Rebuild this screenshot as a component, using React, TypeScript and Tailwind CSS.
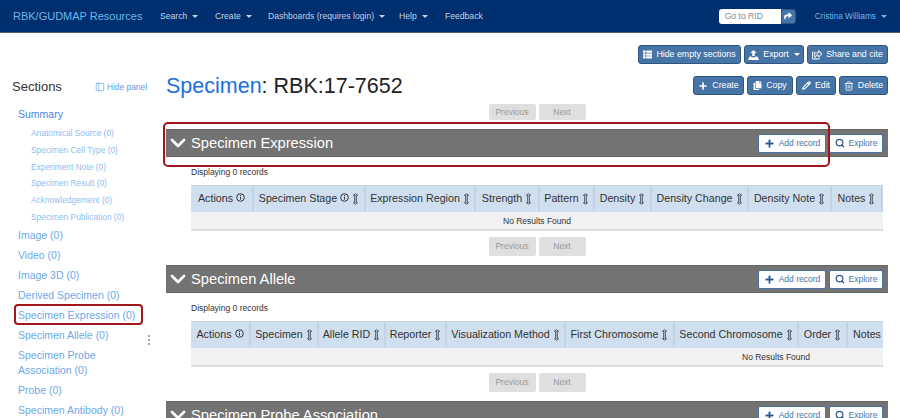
import { ReactNode } from 'react';
import { ChevronDown, PanelLeft, Pencil, Plus, Search, Trash2 } from 'lucide-react';
import { FaCopy, FaRegShareSquare, FaShare, FaThList } from 'react-icons/fa';

function Caret() {
  return <span className="inline-block ml-[5px] align-middle border-x-[3.5px] border-x-transparent border-t-[3.5px] border-t-current" />;
}

function SortIcon() {
  return (
    <svg width="7" height="12" viewBox="0 0 7 12" className="shrink-0" fill="none" stroke="#4c5761" strokeWidth="1">
      <path d="M1 2.6 3.5.7 6 2.6M1 9.4 3.5 11.3 6 9.4" />
      <path d="M2.7 2v8M4.3 2v8" />
    </svg>
  );
}

function InfoIcon() {
  return (
    <svg width="9" height="9" viewBox="0 0 9 9" className="shrink-0 -mt-[2px]" fill="none" stroke="#333" strokeWidth="1">
      <circle cx="4.5" cy="4.5" r="3.8" />
      <path d="M4.5 3.8v2.8M4.5 2v1" />
    </svg>
  );
}

function ExportIcon() {
  return (
    <svg width="11" height="10" viewBox="0 0 11 10" className="shrink-0" fill="currentColor">
      <path d="M5.5 0 8.6 3H6.7v3H4.3V3H2.4z" />
      <path d="M1.6 6.6h1.8v.7h4.2v-.7h1.8L11 10H0z" />
    </svg>
  );
}

function ActionButton({ icon, children, caret, width }: { icon: ReactNode; children: ReactNode; caret?: boolean; width: string }) {
  return (
    <button className={`${width} h-[19px] flex items-center justify-center gap-[4px] rounded-[3px] bg-[#4674a7] border border-[#2e5481] text-white text-[8.8px] whitespace-nowrap`}>
      {icon}
      <span>{children}{caret && <Caret />}</span>
    </button>
  );
}

function Pager({ small }: { small?: boolean }) {
  const cell = small ? 'h-[16px]' : 'h-[19px]';
  return (
    <div className="w-[692px] flex justify-center gap-[3px] text-[8.5px] text-[#999]">
      <span className={`${cell} w-[47px] flex items-center justify-center rounded-[2px] bg-[#dfdfdf]`}>Previous</span>
      <span className={`${cell} w-[47px] flex items-center justify-center rounded-[2px] bg-[#dfdfdf]`}>Next</span>
    </div>
  );
}

function SectionHeader({ title }: { title: string }) {
  return (
    <div className="h-[28px] flex items-center bg-[#737373] border-t border-b border-[#666] text-white">
      <ChevronDown size={24} strokeWidth={2.6} className="shrink-0" />
      <span className="ml-[1px] text-[14.7px] flex-1 leading-none">{title}</span>
      <div className="flex gap-[3px] mr-[5px]">
        <button className="w-[68px] h-[19px] flex items-center justify-center gap-[4px] bg-white border border-[#4674a7] rounded-[2px] text-[#4674a7] text-[8.5px]">
          <Plus size={11} strokeWidth={4} className="text-[#2e5b8f]" />Add record
        </button>
        <button className="w-[54px] h-[19px] flex items-center justify-center gap-[4px] bg-white border border-[#4674a7] rounded-[2px] text-[#4674a7] text-[8.5px]">
          <Search size={10} strokeWidth={3} className="text-[#2e5b8f]" />Explore
        </button>
      </div>
    </div>
  );
}

type Col = { label: string; w: number; info?: boolean; sort?: boolean };

function RecordTable({ cols, center }: { cols: Col[]; center: number }) {
  return (
    <div className="w-[692px] overflow-hidden">
      <div className="flex h-[27px] pb-[1px] bg-[#cfdfef] border-t border-[#c8d4de] text-[10.7px] text-[#333]">
        {cols.map(c => (
          <div
            key={c.label}
            style={{ width: c.w }}
            className="shrink-0 flex items-center justify-center gap-[3px] border-r-2 border-[#c3d3e3] whitespace-nowrap"
          >
            <span>{c.label}</span>
            {c.info && <InfoIcon />}
            {c.sort && <SortIcon />}
          </div>
        ))}
      </div>
      <div className="h-[19px] pt-[2px] flex items-center bg-[#f1f1f1] border-b-2 border-[#dcdcdc] text-[8.5px] text-[#333]">
        <span style={{ marginLeft: center }}>No Results Found</span>
      </div>
    </div>
  );
}

const expressionCols: Col[] = [
  { label: 'Actions', w: 63, info: true },
  { label: 'Specimen Stage', w: 112, info: true, sort: true },
  { label: 'Expression Region', w: 110, sort: true },
  { label: 'Strength', w: 64, sort: true },
  { label: 'Pattern', w: 55, sort: true },
  { label: 'Density', w: 57, sort: true },
  { label: 'Density Change', w: 97, sort: true },
  { label: 'Density Note', w: 83, sort: true },
  { label: 'Notes', w: 51, sort: true },
];

const alleleCols: Col[] = [
  { label: 'Actions', w: 60, info: true },
  { label: 'Specimen', w: 68, sort: true },
  { label: 'Allele RID', w: 67, sort: true },
  { label: 'Reporter', w: 61, sort: true },
  { label: 'Visualization Method', w: 119, sort: true },
  { label: 'First Chromosome', w: 109, sort: true },
  { label: 'Second Chromosome', w: 124, sort: true },
  { label: 'Order', w: 49, sort: true },
  { label: 'Notes', w: 40 },
];

const subLinks = [
  'Anatomical Source (0)',
  'Specimen Cell Type (0)',
  'Experiment Note (0)',
  'Specimen Result (0)',
  'Acknowledgement (0)',
  'Specimen Publication (0)',
];

const sideLinks = [
  'Image (0)',
  'Video (0)',
  'Image 3D (0)',
  'Derived Specimen (0)',
  'Specimen Expression (0)',
  'Specimen Allele (0)',
  'Specimen Probe Association (0)',
  'Probe (0)',
  'Specimen Antibody (0)',
];

function Section({ title, cols, center }: { title: string; cols: Col[]; center: number }) {
  return (
    <section className="mb-[9px]">
      <SectionHeader title={title} />
      <div className="pl-[25px]">
        <p className="mt-[10px] mb-[7px] text-[8.5px] leading-[11px] text-[#333]">Displaying 0 records</p>
        <RecordTable cols={cols} center={center} />
        <div className="mt-[6px]"><Pager /></div>
      </div>
    </section>
  );
}

export default function App() {
  return (
    <div className="relative w-[900px] h-[418px] overflow-hidden bg-white font-['Liberation_Sans',Arial,sans-serif]">
      <nav className="h-[33px] flex items-center bg-[#002f6f] border-b border-[#55606e] text-[#c3d2e6] text-[8.6px]">
        <span className="ml-[13px] w-[147px] text-[11px] text-[#6db5ee]">RBK/GUDMAP Resources</span>
        <span className="w-[55px]">Search<Caret /></span>
        <span className="w-[53px]">Create<Caret /></span>
        <span className="w-[131px]">Dashboards (requires login)<Caret /></span>
        <span className="w-[46px]">Help<Caret /></span>
        <span>Feedback</span>
        <div className="ml-auto flex h-[15px]">
          <span className="w-[62px] pl-[6px] flex items-center bg-white rounded-l-[3px] text-[#888] text-[8.6px]">Go to RID</span>
          <span className="w-[15px] flex items-center justify-center bg-[#4674a7] rounded-r-[3px] border border-[#2e5481]">
            <FaShare size={8} className="text-white" />
          </span>
        </div>
        <span className="ml-[19px] mr-[13px] text-[#6db5ee] text-[8.3px]">Cristina Williams<Caret /></span>
      </nav>

      <div className="flex justify-end gap-[3px] pt-[12px] pr-[12px]">
        <ActionButton width="w-[103px]" icon={<FaThList size={9} />}>Hide empty sections</ActionButton>
        <ActionButton width="w-[60px]" icon={<ExportIcon />} caret>Export</ActionButton>
        <ActionButton width="w-[81px]" icon={<FaRegShareSquare size={10} />}>Share and cite</ActionButton>
      </div>

      <div className="flex">
        <aside className="w-[166px] shrink-0 pt-[15px] pl-[12px]">
          <div className="flex items-center justify-between pr-[19px]">
            <span className="text-[13px] leading-[16px] text-[#333]">Sections</span>
            <span className="flex items-center gap-[2px] text-[8.4px] text-[#5d9ee0]">
              <PanelLeft size={10} strokeWidth={1.6} />Hide panel
            </span>
          </div>
          <div className="mt-[12px] pl-[6px] text-[#3f87e5] text-[10.5px] leading-[15px]">Summary</div>
          <ul className="mt-[3px] pl-[19px] text-[#8fbdf0] text-[8.4px] leading-[16.8px]">
            {subLinks.map(l => <li key={l}>{l}</li>)}
          </ul>
          <ul className="pl-[6px] w-[130px] text-[#6da8ea] text-[10.5px] leading-[15px]">
            {sideLinks.map(l => <li key={l} className="py-[2.5px]">{l}</li>)}
          </ul>
        </aside>

        <main className="flex-1 min-w-0 pr-[12px]">
          <div className="flex items-center justify-between h-[19px] mt-[12px]">
            <h1 className="mt-[3px] text-[21.5px] text-[#222] leading-none">
              <span className="text-[#1b6fe0]">Specimen</span>: RBK:17-7652
            </h1>
            <div className="flex gap-[3px]">
              <ActionButton width="w-[51px]" icon={<Plus size={10} strokeWidth={4} />}>Create</ActionButton>
              <ActionButton width="w-[46px]" icon={<FaCopy size={9} />}>Copy</ActionButton>
              <ActionButton width="w-[40px]" icon={<Pencil size={9} strokeWidth={3} />}>Edit</ActionButton>
              <ActionButton width="w-[49px]" icon={<Trash2 size={10} strokeWidth={2} />}>Delete</ActionButton>
            </div>
          </div>
          <div className="mt-[9px] mb-[9px] ml-[25px]"><Pager small /></div>

          <Section title="Specimen Expression" cols={expressionCols} center={312} />
          <Section title="Specimen Allele" cols={alleleCols} center={551} />
          <SectionHeader title="Specimen Probe Association" />
        </main>
      </div>

      {/* red callouts drawn over the page */}
      <div className="absolute left-[163px] top-[122px] w-[667px] h-[45px] border-2 border-[#a3161c] rounded-[5px] pointer-events-none" />
      <div className="absolute left-[14px] top-[304px] w-[129px] h-[21px] border-2 border-[#a3161c] rounded-[4px] pointer-events-none" />
      <div className="absolute left-[148px] top-[335px] flex flex-col gap-[2px]">
        <span className="w-[2px] h-[2px] bg-[#aaa]" />
        <span className="w-[2px] h-[2px] bg-[#aaa]" />
        <span className="w-[2px] h-[2px] bg-[#aaa]" />
      </div>
    </div>
  );
}
